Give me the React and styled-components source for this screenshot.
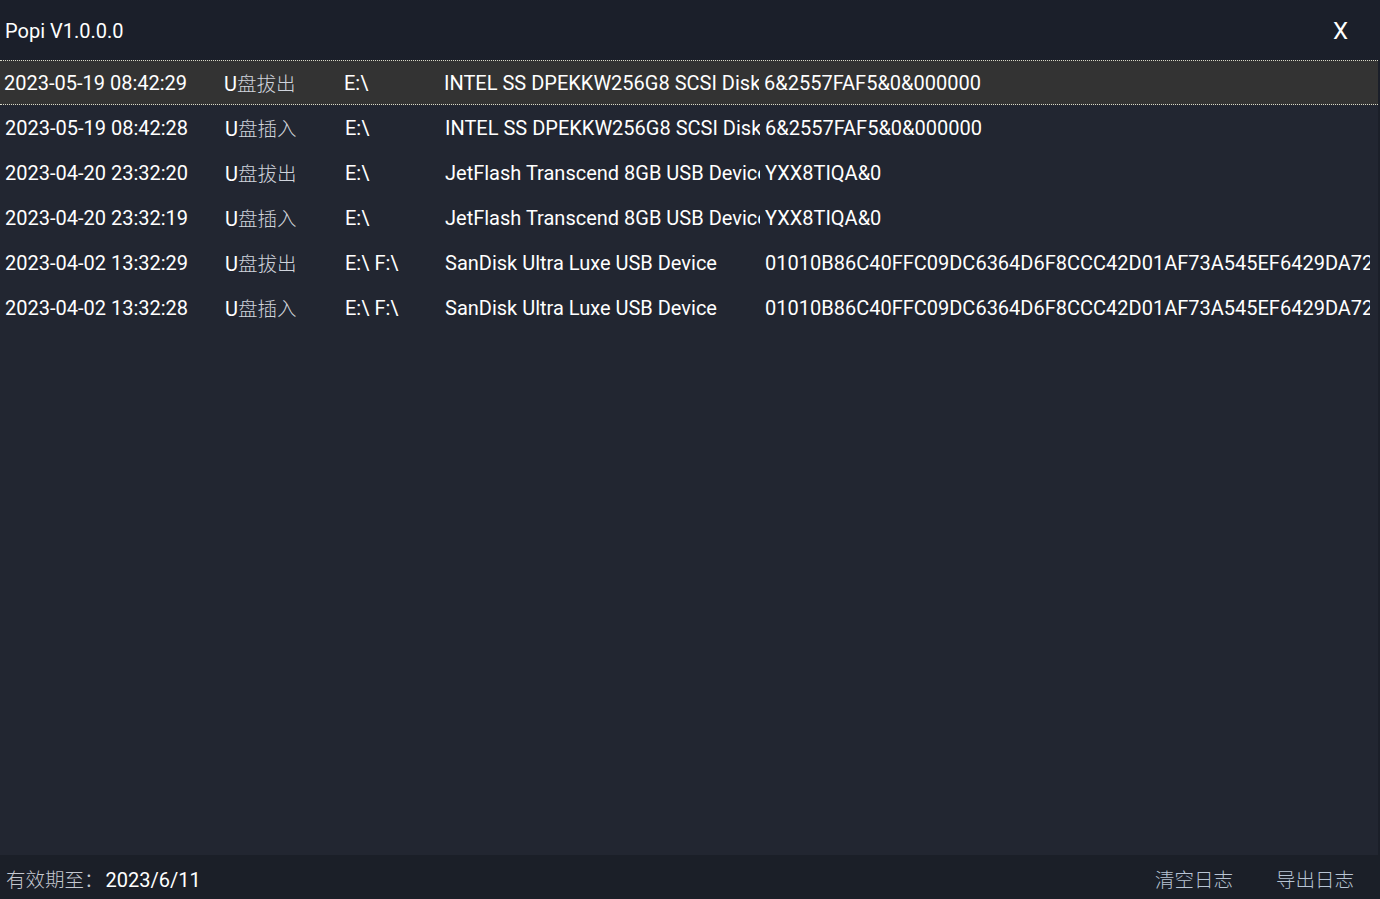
import React from 'react'
import styled, { createGlobalStyle } from 'styled-components'

const GlobalStyle = createGlobalStyle`
    html, body {
        margin: 0;
        padding: 0;
        background: #1b1f29;
    }
    * {
        box-sizing: border-box;
    }
`

const records = [
    { time: '2023-05-19 08:42:29', type: 'U盘拔出', drive: 'E:\\', name: 'INTEL SS DPEKKW256G8 SCSI Disk Device', serial: '6&2557FAF5&0&000000' },
    { time: '2023-05-19 08:42:28', type: 'U盘插入', drive: 'E:\\', name: 'INTEL SS DPEKKW256G8 SCSI Disk Device', serial: '6&2557FAF5&0&000000' },
    { time: '2023-04-20 23:32:20', type: 'U盘拔出', drive: 'E:\\', name: 'JetFlash Transcend 8GB USB Device', serial: 'YXX8TIQA&0' },
    { time: '2023-04-20 23:32:19', type: 'U盘插入', drive: 'E:\\', name: 'JetFlash Transcend 8GB USB Device', serial: 'YXX8TIQA&0' },
    { time: '2023-04-02 13:32:29', type: 'U盘拔出', drive: 'E:\\ F:\\', name: 'SanDisk Ultra Luxe USB Device', serial: '01010B86C40FFC09DC6364D6F8CCC42D01AF73A545EF6429DA7213F4B1E' },
    { time: '2023-04-02 13:32:28', type: 'U盘插入', drive: 'E:\\ F:\\', name: 'SanDisk Ultra Luxe USB Device', serial: '01010B86C40FFC09DC6364D6F8CCC42D01AF73A545EF6429DA7213F4B1E' },
]

const App = () => {
    return (
        <>
            <GlobalStyle />
            <Window>
                <TitleBar>
                    <Title>Popi V1.0.0.0</Title>
                    <CloseButton>X</CloseButton>
                </TitleBar>
                <List>
                    {records.map((r, i) => (
                        <Row key={i} selected={i === 0}>
                            <Cell width={220}>{r.time}</Cell>
                            <Cell width={120}>
                                U<Cjk>{r.type.slice(1)}</Cjk>
                            </Cell>
                            <Cell width={100}>{r.drive}</Cell>
                            <Cell width={315} gap={5}>{r.name}</Cell>
                            <Cell grow gap={8}>{r.serial}</Cell>
                        </Row>
                    ))}
                </List>
                <Footer>
                    <Expire>
                        <Label>有效期至：</Label>2023/6/11
                    </Expire>
                    <Actions>
                        <ActionButton>清空日志</ActionButton>
                        <ActionButton>导出日志</ActionButton>
                    </Actions>
                </Footer>
            </Window>
        </>
    )
}

export default App

const latin = `Roboto, "Noto Sans CJK SC", sans-serif`
const cjk = `"Noto Sans CJK SC", sans-serif`

const Window = styled.div`
    width: 1380px;
    height: 899px;
    display: flex;
    flex-direction: column;
    background: #1b1f29;
    font-family: ${latin};
    color: #ffffff;
    overflow: hidden;
`

const TitleBar = styled.div`
    height: 60px;
    flex-shrink: 0;
    display: flex;
    align-items: center;
    justify-content: space-between;
    padding: 0 32px 0 5px;
    background: #1b1f2a;
`

const Title = styled.div`
    font-size: 20px;
    padding-top: 2px;
`

const CloseButton = styled.div`
    font-size: 24px;
    padding-top: 2px;
    cursor: pointer;
`

const List = styled.div`
    flex: 1;
    margin-right: 2px;
    background: #222631;
    display: flex;
    flex-direction: column;
`

const Row = styled.div`
    height: 45px;
    display: flex;
    align-items: center;
    padding-left: ${p => (p.selected ? '4px' : '5px')};
    background: ${p => (p.selected ? '#333333' : 'transparent')};
    border-top: 1px dotted ${p => (p.selected ? '#d8d8c8' : 'transparent')};
    border-bottom: 1px dotted ${p => (p.selected ? '#d8d8c8' : 'transparent')};
`

const Cell = styled.div`
    width: ${p => (p.width ? `${p.width}px` : 'auto')};
    flex: ${p => (p.grow ? '1' : 'none')};
    min-width: 0;
    margin-right: ${p => `${p.gap || 0}px`};
    overflow: hidden;
    white-space: nowrap;
    font-size: 20px;
    color: #ffffff;
`

const Cjk = styled.span`
    font-family: ${cjk};
    font-size: 19.5px;
    font-weight: 300;
    color: #d0d4dc;
`

const Footer = styled.div`
    height: 44px;
    flex-shrink: 0;
    display: flex;
    align-items: center;
    justify-content: space-between;
    padding: 0 26px 0 6px;
    background: #1b1f28;
`

const Expire = styled.div`
    font-size: 20px;
    color: #ffffff;
    padding-top: 3px;
`

const Label = styled.span`
    font-family: ${cjk};
    font-size: 19.5px;
    font-weight: 300;
    color: #c4c8d0;
    margin-right: 2px;
`

const Actions = styled.div`
    display: flex;
    gap: 43px;
`

const ActionButton = styled.div`
    font-family: ${cjk};
    font-size: 19.5px;
    font-weight: 300;
    color: #b8c4d4;
    padding-top: 3px;
    cursor: pointer;
`
